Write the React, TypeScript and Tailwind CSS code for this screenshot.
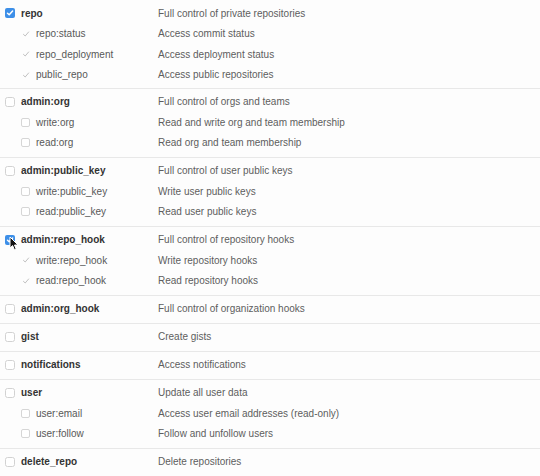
import React from 'react'

type Scope = { name: string; desc: string; sub?: { name: string; desc: string }[]; checked?: boolean; cursor?: boolean }

const scopes: Scope[] = [
  {
    name: 'repo',
    desc: 'Full control of private repositories',
    checked: true,
    sub: [
      { name: 'repo:status', desc: 'Access commit status' },
      { name: 'repo_deployment', desc: 'Access deployment status' },
      { name: 'public_repo', desc: 'Access public repositories' },
    ],
  },
  {
    name: 'admin:org',
    desc: 'Full control of orgs and teams',
    sub: [
      { name: 'write:org', desc: 'Read and write org and team membership' },
      { name: 'read:org', desc: 'Read org and team membership' },
    ],
  },
  {
    name: 'admin:public_key',
    desc: 'Full control of user public keys',
    sub: [
      { name: 'write:public_key', desc: 'Write user public keys' },
      { name: 'read:public_key', desc: 'Read user public keys' },
    ],
  },
  {
    name: 'admin:repo_hook',
    desc: 'Full control of repository hooks',
    checked: true,
    cursor: true,
    sub: [
      { name: 'write:repo_hook', desc: 'Write repository hooks' },
      { name: 'read:repo_hook', desc: 'Read repository hooks' },
    ],
  },
  { name: 'admin:org_hook', desc: 'Full control of organization hooks' },
  { name: 'gist', desc: 'Create gists' },
  { name: 'notifications', desc: 'Access notifications' },
  {
    name: 'user',
    desc: 'Update all user data',
    sub: [
      { name: 'user:email', desc: 'Access user email addresses (read-only)' },
      { name: 'user:follow', desc: 'Follow and unfollow users' },
    ],
  },
  { name: 'delete_repo', desc: 'Delete repositories' },
]

function Box({ checked }: { checked?: boolean }) {
  if (checked) {
    return (
      <span className="w-[10px] h-[10px] rounded-[2px] bg-[#3d8fe8] flex items-center justify-center">
        <svg width="8" height="8" viewBox="0 0 8 8">
          <path d="M1.5 4.2 L3.2 5.8 L6.6 2" fill="none" stroke="white" strokeWidth="1.5" strokeLinecap="round" strokeLinejoin="round" />
        </svg>
      </span>
    )
  }
  return <span className="w-[10px] h-[10px] rounded-[2.5px] border border-[#d2d2d2] bg-white" />
}

function SubBox({ inherited }: { inherited?: boolean }) {
  if (inherited) {
    return (
      <span className="w-[9px] h-[9px] flex items-center justify-center">
        <svg width="8" height="8" viewBox="0 0 8 8">
          <path d="M1.5 4.4 L3.2 6 L6.6 2" fill="none" stroke="#c0c0c0" strokeWidth="1" strokeLinecap="round" strokeLinejoin="round" />
        </svg>
      </span>
    )
  }
  return <span className="w-[9px] h-[9px] rounded-[2px] border border-[#d6d6d6] bg-white" />
}

export default function App() {
  return (
    <div
      className="w-[540px] h-[476px] overflow-hidden bg-[#fdfdfd] text-[10px]"
      style={{ fontFamily: '"Liberation Sans", Arial, sans-serif' }}
    >
      {scopes.map((s, i) => (
        <div
          key={s.name}
          className={`${i === 0 ? 'pt-[3px] pb-[2.5px]' : 'pt-[3px] pb-[3.5px]'} border-b border-[#e8e8e8]`}
        >
          <div className="relative h-[20.5px] flex items-center">
            <div className="w-[158px] shrink-0 flex items-center">
              <span className="ml-[5px] mr-[6px] flex">
                <Box checked={s.checked} />
              </span>
              <span className="font-bold text-[#333]">{s.name}</span>
            </div>
            <span className="text-[#5e5e5e]">{s.desc}</span>
            {s.cursor && (
              <svg className="absolute left-[9px] top-[6px]" width="10" height="15" viewBox="0 0 10 15">
                <path d="M1 1 L1 12 L3.6 9.6 L5.4 13.8 L7.2 13 L5.5 9 L9 9 Z" fill="#111" stroke="white" strokeWidth="1" strokeLinejoin="round" />
              </svg>
            )}
          </div>
          {s.sub?.map((c) => (
            <div key={c.name} className="h-[20.5px] flex items-center">
              <div className="w-[158px] shrink-0 flex items-center">
                <span className="ml-[21px] mr-[6px] flex">
                  <SubBox inherited={s.checked} />
                </span>
                <span className="text-[#585858]">{c.name}</span>
              </div>
              <span className="text-[#5e5e5e]">{c.desc}</span>
            </div>
          ))}
        </div>
      ))}
    </div>
  )
}
